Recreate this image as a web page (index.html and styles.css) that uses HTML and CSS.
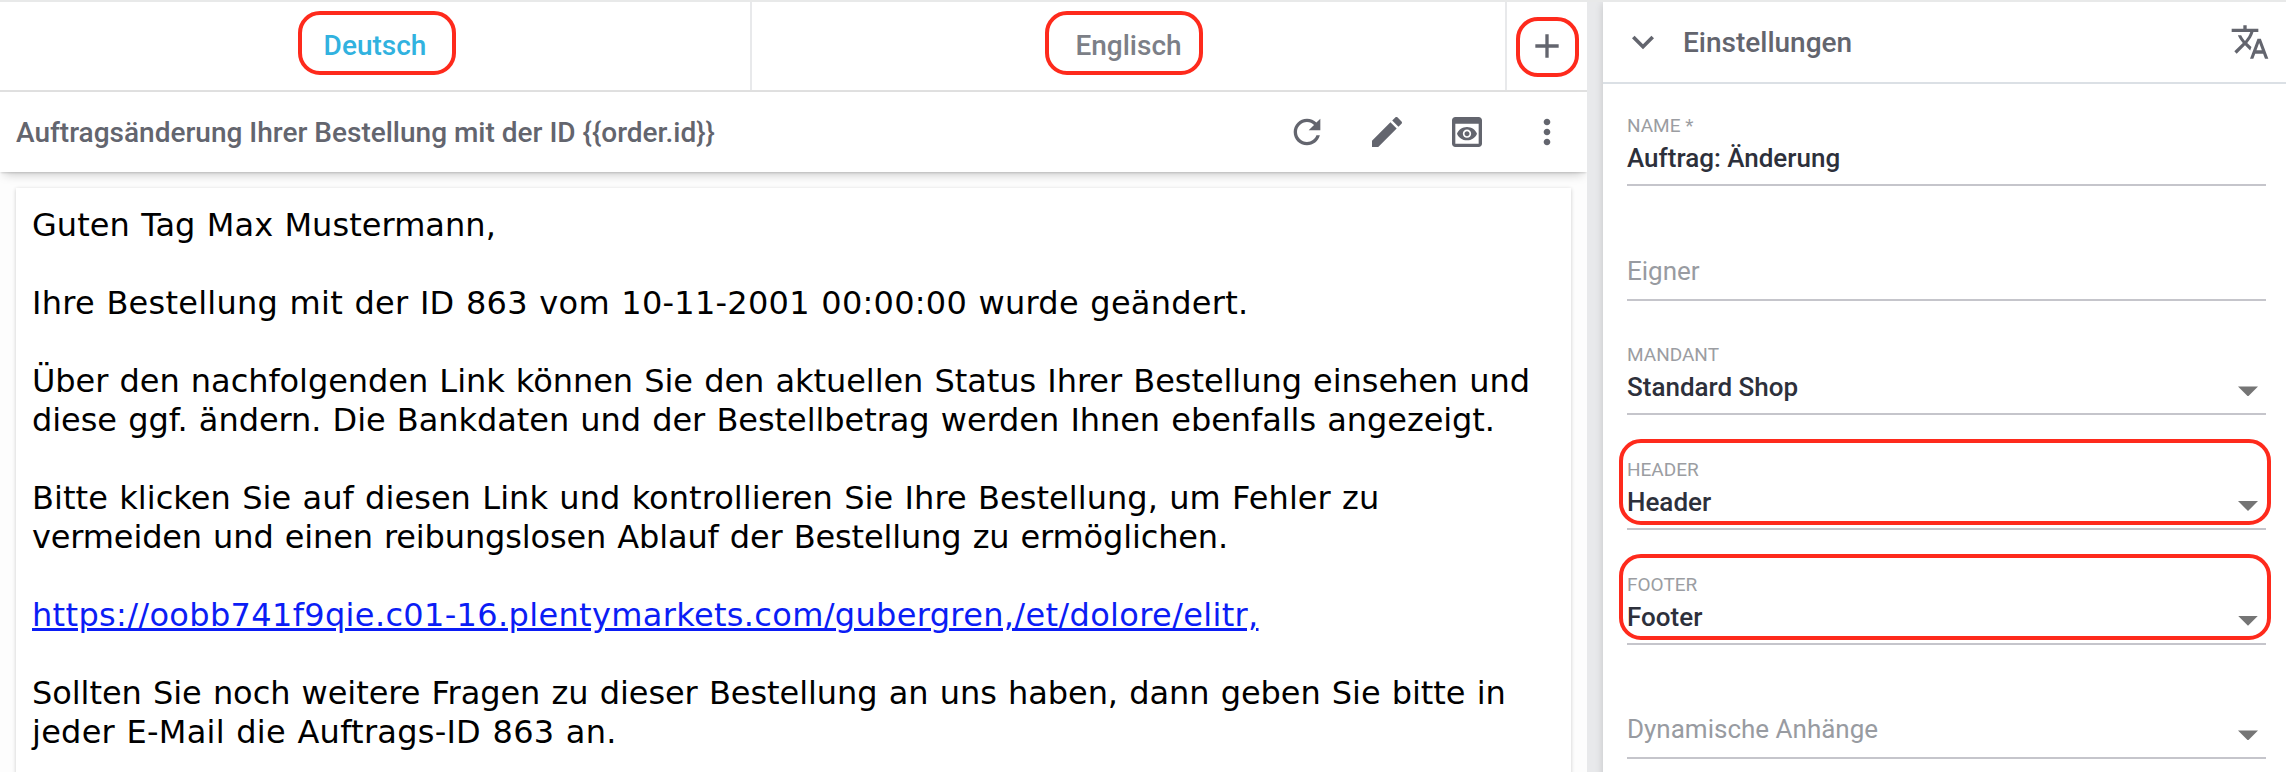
FILE: index.html
```html
<!DOCTYPE html>
<html lang="de">
<head>
<meta charset="utf-8">
<title>E-Mail-Vorlage</title>
<link rel="stylesheet" href="styles.css">
</head>
<body>
<div class="app">
  <main class="editor">
    <nav class="tabs">
      <div class="tab tab-active"><span class="tab-text">Deutsch</span><span class="mark mark-de"></span></div>
      <div class="tab"><span class="tab-text">Englisch</span><span class="mark mark-en"></span></div>
      <div class="tab-add">
        <svg class="icon" viewBox="0 0 24 24"><path d="M19 13h-6v6h-2v-6H5v-2h6V5h2v6h6v2z"/></svg>
        <span class="mark mark-add"></span>
      </div>
    </nav>
    <div class="toolbar">
      <h1 class="subject">Auftragsänderung Ihrer Bestellung mit der ID {{order.id}}</h1>
      <div class="actions">
        <svg class="icon" viewBox="0 0 24 24"><path d="M17.65 6.35C16.2 4.9 14.21 4 12 4c-4.42 0-7.99 3.58-7.99 8s3.57 8 7.99 8c3.73 0 6.84-2.55 7.73-6h-2.08c-.82 2.33-3.04 4-5.65 4-3.31 0-6-2.69-6-6s2.69-6 6-6c1.66 0 3.14.69 4.22 1.78L13 11h7V4l-2.35 2.35z"/></svg>
        <svg class="icon" viewBox="0 0 24 24"><path d="M3 17.25V21h3.75L17.81 9.94l-3.75-3.75L3 17.25zM20.71 7.04c.39-.39.39-1.02 0-1.41l-2.34-2.34c-.39-.39-1.02-.39-1.41 0l-1.83 1.83 3.75 3.75 1.83-1.83z"/></svg>
        <svg class="icon" viewBox="0 0 24 24"><path d="M19 3H5c-1.11 0-2 .9-2 2v14c0 1.1.89 2 2 2h14c1.11 0 2-.9 2-2V5c0-1.1-.89-2-2-2zm0 16H5V7h14v12zm-5.500-6c0 .83-.67 1.500-1.500 1.500s-1.500-.67-1.500-1.500.67-1.500 1.500-1.500 1.500.67 1.500 1.500zM12 9c-2.730 0-5.060 1.660-6 4 .94 2.340 3.270 4 6 4s5.060-1.660 6-4c-.94-2.340-3.270-4-6-4zm0 6.500c-1.380 0-2.500-1.120-2.500-2.500s1.120-2.500 2.500-2.500 2.500 1.120 2.500 2.500-1.120 2.500-2.500 2.500z"/></svg>
        <svg class="icon" viewBox="0 0 24 24"><path d="M12 8c1.100 0 2-.9 2-2s-.9-2-2-2-2 .9-2 2 .9 2 2 2zm0 2c-1.100 0-2 .9-2 2s.9 2 2 2 2-.9 2-2-.9-2-2-2zm0 6c-1.100 0-2 .9-2 2s.9 2 2 2 2-.9 2-2-.9-2-2-2z"/></svg>
      </div>
    </div>
    <article class="mail">
      <p>Guten Tag Max Mustermann,</p>
      <p class="open">Ihre Bestellung mit der ID 863 vom 10-11-2001 00:00:00 wurde geändert.</p>
      <p class="snug">Über den nachfolgenden Link können Sie den aktuellen Status Ihrer Bestellung einsehen und<br>diese ggf. ändern. Die Bankdaten und der Bestellbetrag werden Ihnen ebenfalls angezeigt.</p>
      <p>Bitte klicken Sie auf diesen Link und kontrollieren Sie Ihre Bestellung, um Fehler zu<br><span class="tight">vermeiden und einen reibungslosen Ablauf der Bestellung zu ermöglichen.</span></p>
      <p><a class="link" href="#">https://oobb741f9qie.c01-16.plentymarkets.com/gubergren,/et/dolore/elitr,</a></p>
      <p class="snug">Sollten Sie noch weitere Fragen zu dieser Bestellung an uns haben, dann geben Sie bitte in<br><span class="open">jeder E-Mail die Auftrags-ID 863 an.</span></p>
    </article>
  </main>
  <aside class="settings">
    <header class="settings-head">
      <svg class="chevron" viewBox="0 0 24 24"><path d="M16.590 8.590L12 13.170 7.410 8.590 6 10l6 6 6-6z"/></svg>
      <h2 class="settings-title">Einstellungen</h2>
      <svg class="icon" viewBox="0 0 24 24"><path d="M12.870 15.070l-2.540-2.510.03-.03c1.740-1.940 2.980-4.170 3.710-6.530H17V4h-7V2H8v2H1v1.990h11.170C11.500 7.920 10.440 9.750 9 11.350 8.070 10.320 7.300 9.190 6.690 8h-2c.73 1.630 1.730 3.170 2.980 4.560l-5.090 5.020L4 19l5-5 3.110 3.110.76-2.040zM18.500 10h-2L12 22h2l1.120-3h4.750L21 22h2l-4.500-12zm-2.620 7l1.620-4.330L19.120 17h-3.240z"/></svg>
    </header>
    <div class="fields">
      <div class="field"><span class="label">NAME *</span><div class="row"><span class="value">Auftrag: Änderung</span></div></div>
      <div class="field"><div class="row"><span class="value empty">Eigner</span></div></div>
      <div class="field"><span class="label">MANDANT</span><div class="row"><span class="value">Standard Shop</span><i class="arrow"></i></div></div>
      <div class="field"><span class="label">HEADER</span><div class="row"><span class="value">Header</span><i class="arrow"></i></div><span class="mark mark-field"></span></div>
      <div class="field"><span class="label">FOOTER</span><div class="row"><span class="value">Footer</span><i class="arrow"></i></div><span class="mark mark-field mark-footer"></span></div>
      <div class="field"><div class="row"><span class="value empty">Dynamische Anhänge</span><i class="arrow"></i></div></div>
    </div>
  </aside>
</div>
</body>
</html>
```
FILE: styles.css
```css
* { box-sizing: border-box; }
body {
  margin: 0;
  background: #e8e9eb;
  font-family: Roboto, "Liberation Sans", sans-serif;
  color: #63656e;
}
.app {
  display: flex;
  gap: 16px;
  height: 772px;
  border-top: 2px solid #e8e9e9;
  overflow: hidden;
}
.editor {
  width: 1587px;
  height: 770px;
  background: #fdfdfd;
  overflow: hidden;
}
.icon { width: 40px; height: 40px; fill: #63656e; flex: none; }

/* language tabs */
.tabs {
  display: flex;
  height: 90px;
  background: #fff;
  border-bottom: 2px solid #e0e0e0;
}
.tab {
  position: relative;
  width: 752px;
  border-right: 2px solid #e8e9eb;
  text-align: center;
  font-size: 28px;
  font-weight: 500;
  line-height: 87px;
  color: #7c7f87;
}
.tab + .tab { width: 755px; }
.tab-active { color: #31b2df; }
.tab-add {
  position: relative;
  flex: 1;
  display: flex;
  align-items: center;
  justify-content: center;
}

/* highlight frames */
.mark {
  position: absolute;
  border: 4px solid #fe2a1c;
  border-radius: 22px;
  pointer-events: none;
}
.mark-de { left: 298px; top: 9px; width: 158px; height: 64px; }
.mark-en { left: 293px; top: 9px; width: 158px; height: 64px; }
.mark-add { left: 9px; top: 15px; width: 63px; height: 60px; }
.mark-field { left: -8px; top: -4px; width: 652px; height: 86px; }

/* subject bar */
.toolbar {
  position: relative;
  display: flex;
  align-items: center;
  justify-content: space-between;
  height: 80px;
  padding: 0 20px 0 16px;
  background: #fff;
  box-shadow: 0 6px 10px -4px rgba(0, 0, 0, .22), 0 2px 2px -1px rgba(0, 0, 0, .14);
}
.subject { margin: 0; padding-top: 1px; font-size: 28px; font-weight: 500; line-height: 40px; }
.actions { display: flex; gap: 40px; }

/* mail preview */
.mail {
  margin: 16px 16px 0;
  height: 640px;
  padding: 18px 16px;
  background: #fff;
  box-shadow: 0 1px 4px rgba(0, 0, 0, .2);
  font-family: Verdana, "DejaVu Sans", sans-serif;
  font-size: 32px;
  line-height: 39px;
  letter-spacing: .05px;
  word-spacing: 1.1px;
  color: #000;
  white-space: nowrap;
}
.mail p { margin: 0 0 39px; }
.open { letter-spacing: .25px; }
.snug { letter-spacing: -.06px; }
.tight { letter-spacing: -.14px; }
.link {
  color: #0b1df5;
  letter-spacing: .34px;
  text-decoration-thickness: 3px;
}

/* settings panel */
.settings {
  flex: 1;
  height: 780px;
  background: #fff;
  box-shadow: 0 2px 8px rgba(0, 0, 0, .16);
}
.settings-head {
  display: flex;
  align-items: center;
  height: 82px;
  padding: 0 16px 0 18px;
  border-bottom: 2px solid #dbe0e5;
}
.chevron { width: 44px; height: 44px; fill: #63656e; }
.settings-title {
  flex: 1;
  margin: 0 0 0 18px;
  padding-top: 2px;
  font-size: 28px;
  font-weight: 500;
  line-height: 40px;
}
.fields {
  display: flex;
  flex-direction: column;
  gap: 27.7px;
  padding: 15px 20px 0 24px;
}
.field {
  position: relative;
  display: flex;
  flex-direction: column;
  justify-content: flex-end;
  gap: 2px;
  height: 87px;
  flex: none;
  border-bottom: 2px solid #c5c5cb;
  padding-bottom: 8px;
}
.label { font-size: 19px; line-height: 24px; color: #9b9da2; }
.row { display: flex; justify-content: space-between; align-items: flex-end; }
.value { font-size: 26px; font-weight: 500; line-height: 36px; color: #2d303b; }
.value.empty { font-weight: 400; color: #989ba1; padding-bottom: 2px; }
.arrow {
  width: 20px;
  height: 10px;
  margin: 0 8px 9px 0;
  background: #757575;
  clip-path: polygon(0 0, 100% 0, 50% 100%);
}
```
